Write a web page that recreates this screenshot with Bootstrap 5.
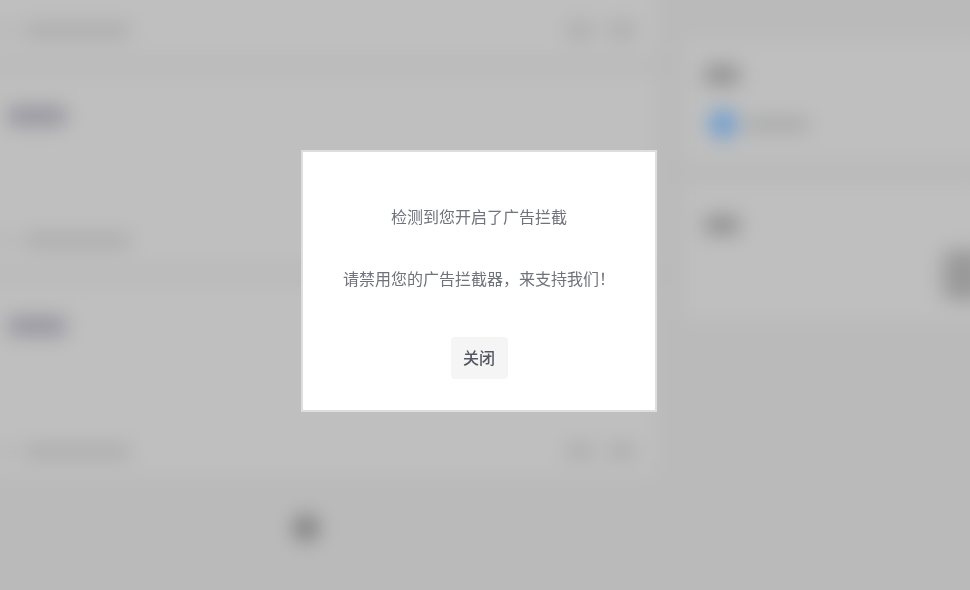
<!DOCTYPE html>
<html lang="zh-CN">
<head>
<meta charset="utf-8">
<title>检测到您开启了广告拦截</title>
<link href="https://cdn.jsdelivr.net/npm/bootstrap@5.3.0/dist/css/bootstrap.min.css" rel="stylesheet">
<style>
html, body { height: 100%; overflow: hidden; background: #b9b9b9; font-family: "Liberation Sans", "Noto Sans CJK SC", sans-serif; }
.blur-page { filter: blur(10px); width: 1000px; height: 640px; margin: -25px 0 0 -15px; background: #bababa; overflow: hidden; }
.main-col { width: 670px; flex: none; }
.side-col { width: 330px; margin-left: 30px; flex: none; padding-top: 65px; }
.post-box { background: #bfbfbf; }
.post-first { height: 80px; margin-bottom: 20px; }
.post-full { height: 190px; margin-bottom: 20px; }
.post-head { height: 160px; padding: 32px 0 0 23px; }
.post-tag { width: 58px; height: 18px; background: #93929c; border-radius: 3px; }
.post-foot { padding: 0 20px 0 38px; }
.post-first .post-foot { padding-top: 49px; }
.foot-text { width: 106px; height: 11px; background: #a6a6a6; }
.foot-icon { width: 10px; height: 10px; background: #a9a9a9; margin-left: -25px; }
.foot-meta { width: 26px; height: 12px; background: #a6a6a6; }
.pager-dot { width: 26px; height: 26px; background: #7e7e7e; border-radius: 50%; margin: 40px 0 0 308px; }
.side-one { height: 120px; margin-bottom: 25px; padding: 26px 0 0 20px; }
.side-two { height: 135px; padding: 31px 0 0 20px; }
.side-title { width: 34px; height: 18px; background: #8e8e8e; }
.side-row { margin-top: 26px; }
.side-badge { width: 28px; height: 28px; background: #6c9ccf; border-radius: 50%; margin-left: 4px; }
.side-name { width: 64px; height: 11px; background: #a3a3a3; }
.side-thumb { width: 70px; height: 50px; background: #999; border-radius: 8px; margin: 16px 0 0 238px; }
.ad-overlay { position: fixed; inset: 0; padding: 150px 12px 0 0; will-change: transform; }
.ad-dialog { width: 356px; height: 262px; border: 2px solid #dedede; border-radius: 0; background: #fff; color: #70727c; font-size: 16px; line-height: 24px; padding-top: 54px; }
.ad-line { margin-bottom: 38px; }
.ad-close { width: 57px; height: 42px; margin-top: 7px; padding: 2px 0 0; background: #f5f5f5; border: 0; border-radius: 4px; color: #555862; font-size: 16px; font-weight: 500; }
</style>
</head>
<body>
<div class="blur-page d-flex">
  <div class="main-col">
    <div class="post-box post-first">
      <div class="post-foot d-flex justify-content-between align-items-center">
        <div class="d-flex gap-3"><span class="foot-icon"></span><span class="foot-text"></span></div>
        <div class="d-flex gap-3"><span class="foot-meta"></span><span class="foot-meta"></span></div>
      </div>
    </div>
    <div class="post-box post-full">
      <div class="post-head"><div class="post-tag"></div></div>
      <div class="post-foot d-flex justify-content-between align-items-center">
        <div class="d-flex gap-3"><span class="foot-icon"></span><span class="foot-text"></span></div>
      </div>
    </div>
    <div class="post-box post-full">
      <div class="post-head"><div class="post-tag"></div></div>
      <div class="post-foot d-flex justify-content-between align-items-center">
        <div class="d-flex gap-3"><span class="foot-icon"></span><span class="foot-text"></span></div>
        <div class="d-flex gap-3"><span class="foot-meta"></span><span class="foot-meta"></span></div>
      </div>
    </div>
    <div class="pager-dot"></div>
  </div>
  <div class="side-col">
    <div class="post-box side-one">
      <div class="side-title"></div>
      <div class="d-flex align-items-center gap-2 side-row"><span class="side-badge"></span><span class="side-name"></span></div>
    </div>
    <div class="post-box side-two">
      <div class="side-title"></div>
      <div class="side-thumb"></div>
    </div>
  </div>
</div>

<div class="ad-overlay d-flex justify-content-center align-items-start">
  <div class="card ad-dialog text-center">
    <p class="ad-line">检测到您开启了广告拦截</p>
    <p class="ad-line">请禁用您的广告拦截器，来支持我们！</p>
    <div><button type="button" class="btn ad-close">关闭</button></div>
  </div>
</div>
<script src="https://cdn.jsdelivr.net/npm/bootstrap@5.3.0/dist/js/bootstrap.bundle.min.js"></script>
</body>
</html>
